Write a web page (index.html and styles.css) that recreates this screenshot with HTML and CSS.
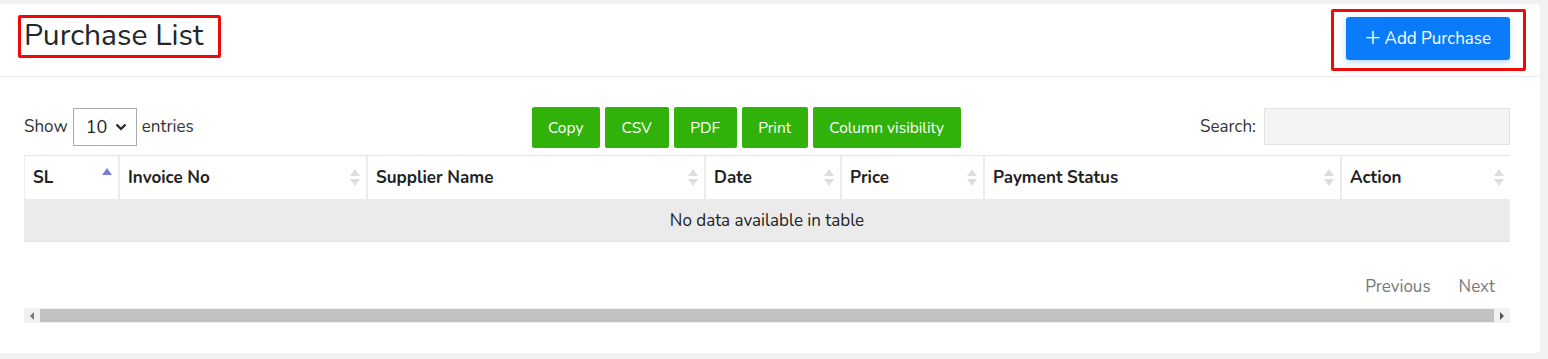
FILE: index.html
```html
<!DOCTYPE html>
<html>
<head>
<meta charset="utf-8">
<link rel="stylesheet" href="styles.css">
</head>
<body>
<div class="page">
  <div class="card">
    <div class="card-header">
      <div class="mark mark-title"><h1 class="title">Purchase List</h1></div>
      <div class="mark mark-btn"><button class="btn-add"><span class="plus">+</span>Add Purchase</button></div>
    </div>
    <div class="card-body">
      <div class="toolbar">
        <div class="length">Show <span class="select">10 <svg width="12" height="8" viewBox="0 0 12 8"><path d="M1.5 1.5 L6 6 L10.5 1.5" fill="none" stroke="#222" stroke-width="2.2"/></svg></span> entries</div>
        <div class="buttons">
          <span class="gbtn">Copy</span><span class="gbtn">CSV</span><span class="gbtn">PDF</span><span class="gbtn">Print</span><span class="gbtn">Column visibility</span>
        </div>
        <div class="search">Search: <span class="search-input"></span></div>
      </div>
      <div class="table">
        <div class="thead">
          <div class="th c1">SL<span class="sort asc"></span></div>
          <div class="th c2">Invoice No<span class="sort"></span></div>
          <div class="th c3">Supplier Name<span class="sort"></span></div>
          <div class="th c4">Date<span class="sort"></span></div>
          <div class="th c5">Price<span class="sort"></span></div>
          <div class="th c6">Payment Status<span class="sort"></span></div>
          <div class="th c7">Action<span class="sort"></span></div>
        </div>
        <div class="empty">No data available in table</div>
      </div>
      <div class="pager"><span>Previous</span><span>Next</span></div>
      <div class="scrollbar"><span class="arrow left"></span><span class="thumb"></span><span class="arrow right"></span></div>
    </div>
  </div>
</div>
</body>
</html>
```

FILE: styles.css
```css
* { box-sizing: border-box; }
body {
  margin: 0;
  background: #f1f1f3;
  font-family: "Nunito", "Lato", "Open Sans", sans-serif;
  color: #212529;
}
.page {
  padding: 4px 8px 6px 0;
}
.card {
  background: #fff;
  height: 349px;
  border-radius: 0 5px 5px 0;
}
.card-header {
  height: 73px;
  border-bottom: 1px solid #ececec;
  display: flex;
  justify-content: space-between;
  align-items: flex-start;
  padding: 0 14px 0 18px;
}
.mark {
  border: 3px solid #ef0a0a;
  border-radius: 2px;
}
.mark-title {
  margin-top: 11px;
  width: 203px;
  height: 43px;
  padding-left: 3px;
}
.title {
  margin: 0;
  font-weight: 400;
  font-size: 30px;
  line-height: 36px;
  color: #23262a;
}
.mark-btn {
  margin-top: 5px;
  width: 195px;
  height: 62px;
  padding: 5px 0 0 12px;
}
.btn-add {
  width: 164px;
  height: 43px;
  border: 0;
  border-radius: 3px;
  background: #0a7cfb;
  color: #fff;
  font-family: inherit;
  font-size: 17px;
  box-shadow: 0 2px 6px rgba(10,124,251,0.3);
  display: flex;
  align-items: center;
  justify-content: center;
  gap: 4px;
  padding: 0;
}
.plus {
  font-size: 26px;
  font-weight: 300;
  line-height: 1;
  margin-top: -4px;
}
.card-body {
  padding: 30px 30px 0 24px;
}
.toolbar {
  display: flex;
  align-items: center;
  height: 41px;
}
.length {
  font-size: 17px;
  color: #333;
  display: flex;
  align-items: center;
  gap: 5px;
  margin-top: -2px;
}
.select {
  width: 64px;
  height: 38px;
  border: 1px solid #aaa;
  display: inline-flex;
  align-items: center;
  justify-content: space-between;
  padding: 0 9px 0 12px;
  font-size: 18px;
  color: #222;
}
.buttons {
  display: flex;
  gap: 5px;
  margin-left: 338px;
}
.gbtn {
  background: #31b20a;
  color: #fff;
  font-size: 15.5px;
  height: 41px;
  display: inline-flex;
  align-items: center;
  justify-content: center;
  border-radius: 2px;
  padding: 0 16px;
}
.gbtn:first-child { width: 68px; }
.gbtn:nth-child(2) { width: 64px; }
.gbtn:nth-child(3) { width: 63px; }
.gbtn:nth-child(4) { width: 66px; }
.gbtn:nth-child(5) { width: 148px; }
.search {
  margin-left: auto;
  font-size: 17px;
  color: #333;
  display: flex;
  align-items: center;
  gap: 8px;
  margin-top: -3px;
}
.search-input {
  width: 246px;
  height: 37px;
  background: #f4f4f4;
  border: 1px solid #e2e2e2;
}
.table {
  margin-top: 7px;
  border-top: 1px solid #e4e4e4;
}
.thead {
  display: flex;
  height: 43px;
}
.th {
  position: relative;
  display: flex;
  align-items: center;
  padding-left: 8px;
  font-weight: 700;
  font-size: 17px;
  color: #222;
  border-left: 2px solid #ececec;
}
.th.c1 { border-left: 1px solid #eee; }
.c1 { width: 94px; }
.c2 { width: 248px; }
.c3 { width: 338px; }
.c4 { width: 136px; }
.c5 { width: 143px; }
.c6 { width: 357px; }
.c7 { width: 170px; }
.sort {
  position: absolute;
  right: 6px;
  top: 13px;
  width: 10px;
  height: 18px;
}
.sort::before, .sort::after {
  content: "";
  position: absolute;
  left: 0;
  border-left: 5px solid transparent;
  border-right: 5px solid transparent;
}
.sort::before { top: 0; border-bottom: 7px solid #ddd; }
.sort::after { top: 10px; border-top: 7px solid #ddd; }
.sort.asc { top: 12px; }
.sort.asc::before { border-bottom-color: #7b7be0; }
.sort.asc::after { display: none; }
.empty {
  height: 43px;
  background: #ebebeb;
  border-bottom: 1px solid #e4e4e4;
  display: flex;
  align-items: center;
  justify-content: center;
  font-size: 17px;
  color: #222;
}
.pager {
  display: flex;
  justify-content: flex-end;
  gap: 28px;
  padding-right: 15px;
  margin-top: 32px;
  font-size: 17px;
  color: #777;
  height: 24px;
  align-items: center;
}
.scrollbar {
  margin-top: 10px;
  height: 15px;
  background: #f1f1f1;
  display: flex;
  align-items: center;
}
.thumb {
  flex: 1;
  height: 13px;
  background: #c1c1c1;
}
.arrow {
  width: 16px;
  height: 15px;
  position: relative;
}
.arrow::after {
  content: "";
  position: absolute;
  top: 4px;
  border-top: 4px solid transparent;
  border-bottom: 4px solid transparent;
}
.arrow.left::after { left: 6px; border-right: 4px solid #777; }
.arrow.right::after { left: 6px; border-left: 4px solid #555; }
```
